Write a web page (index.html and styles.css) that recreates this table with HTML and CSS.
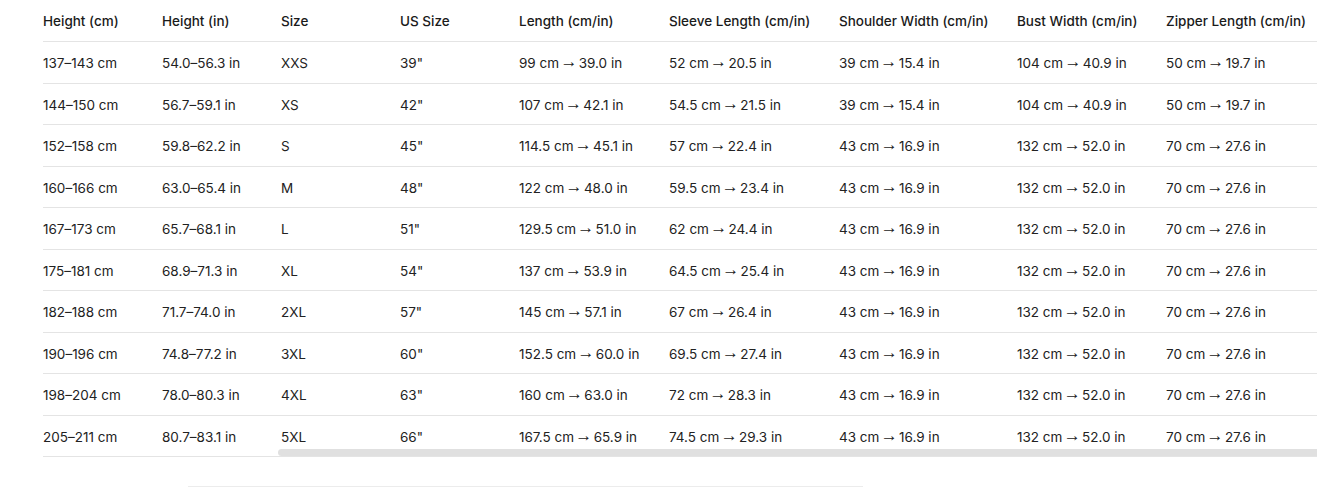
FILE: index.html
```html
<!DOCTYPE html>
<html lang="en">
<head>
<meta charset="utf-8">
<title>Size Chart</title>
<link rel="stylesheet" href="styles.css">
</head>
<body>
<div class="page">
  <div class="table-wrap">
    <table class="size-table">
      <colgroup>
        <col class="c-a"><col class="c-a"><col class="c-a"><col class="c-a">
        <col class="c-len"><col class="c-sleeve"><col class="c-shoulder"><col class="c-bust"><col class="c-zip">
      </colgroup>
      <thead>
        <tr>
          <th>Height (cm)</th><th>Height (in)</th><th>Size</th><th>US Size</th><th>Length (cm/in)</th><th>Sleeve Length (cm/in)</th><th>Shoulder Width (cm/in)</th><th>Bust Width (cm/in)</th><th>Zipper Length (cm/in)</th>
        </tr>
      </thead>
      <tbody>
        <tr><td>137–143 cm</td><td>54.0–56.3 in</td><td>XXS</td><td>39"</td><td>99 cm <span class="arr">→</span> 39.0 in</td><td>52 cm <span class="arr">→</span> 20.5 in</td><td>39 cm <span class="arr">→</span> 15.4 in</td><td>104 cm <span class="arr">→</span> 40.9 in</td><td>50 cm <span class="arr">→</span> 19.7 in</td></tr>
        <tr><td>144–150 cm</td><td>56.7–59.1 in</td><td>XS</td><td>42"</td><td>107 cm <span class="arr">→</span> 42.1 in</td><td>54.5 cm <span class="arr">→</span> 21.5 in</td><td>39 cm <span class="arr">→</span> 15.4 in</td><td>104 cm <span class="arr">→</span> 40.9 in</td><td>50 cm <span class="arr">→</span> 19.7 in</td></tr>
        <tr><td>152–158 cm</td><td>59.8–62.2 in</td><td>S</td><td>45"</td><td>114.5 cm <span class="arr">→</span> 45.1 in</td><td>57 cm <span class="arr">→</span> 22.4 in</td><td>43 cm <span class="arr">→</span> 16.9 in</td><td>132 cm <span class="arr">→</span> 52.0 in</td><td>70 cm <span class="arr">→</span> 27.6 in</td></tr>
        <tr><td>160–166 cm</td><td>63.0–65.4 in</td><td>M</td><td>48"</td><td>122 cm <span class="arr">→</span> 48.0 in</td><td>59.5 cm <span class="arr">→</span> 23.4 in</td><td>43 cm <span class="arr">→</span> 16.9 in</td><td>132 cm <span class="arr">→</span> 52.0 in</td><td>70 cm <span class="arr">→</span> 27.6 in</td></tr>
        <tr><td>167–173 cm</td><td>65.7–68.1 in</td><td>L</td><td>51"</td><td>129.5 cm <span class="arr">→</span> 51.0 in</td><td>62 cm <span class="arr">→</span> 24.4 in</td><td>43 cm <span class="arr">→</span> 16.9 in</td><td>132 cm <span class="arr">→</span> 52.0 in</td><td>70 cm <span class="arr">→</span> 27.6 in</td></tr>
        <tr><td>175–181 cm</td><td>68.9–71.3 in</td><td>XL</td><td>54"</td><td>137 cm <span class="arr">→</span> 53.9 in</td><td>64.5 cm <span class="arr">→</span> 25.4 in</td><td>43 cm <span class="arr">→</span> 16.9 in</td><td>132 cm <span class="arr">→</span> 52.0 in</td><td>70 cm <span class="arr">→</span> 27.6 in</td></tr>
        <tr><td>182–188 cm</td><td>71.7–74.0 in</td><td>2XL</td><td>57"</td><td>145 cm <span class="arr">→</span> 57.1 in</td><td>67 cm <span class="arr">→</span> 26.4 in</td><td>43 cm <span class="arr">→</span> 16.9 in</td><td>132 cm <span class="arr">→</span> 52.0 in</td><td>70 cm <span class="arr">→</span> 27.6 in</td></tr>
        <tr><td>190–196 cm</td><td>74.8–77.2 in</td><td>3XL</td><td>60"</td><td>152.5 cm <span class="arr">→</span> 60.0 in</td><td>69.5 cm <span class="arr">→</span> 27.4 in</td><td>43 cm <span class="arr">→</span> 16.9 in</td><td>132 cm <span class="arr">→</span> 52.0 in</td><td>70 cm <span class="arr">→</span> 27.6 in</td></tr>
        <tr><td>198–204 cm</td><td>78.0–80.3 in</td><td>4XL</td><td>63"</td><td>160 cm <span class="arr">→</span> 63.0 in</td><td>72 cm <span class="arr">→</span> 28.3 in</td><td>43 cm <span class="arr">→</span> 16.9 in</td><td>132 cm <span class="arr">→</span> 52.0 in</td><td>70 cm <span class="arr">→</span> 27.6 in</td></tr>
        <tr><td>205–211 cm</td><td>80.7–83.1 in</td><td>5XL</td><td>66"</td><td>167.5 cm <span class="arr">→</span> 65.9 in</td><td>74.5 cm <span class="arr">→</span> 29.3 in</td><td>43 cm <span class="arr">→</span> 16.9 in</td><td>132 cm <span class="arr">→</span> 52.0 in</td><td>70 cm <span class="arr">→</span> 27.6 in</td></tr>
      </tbody>
    </table>
    <div class="scroll-thumb"></div>
  </div>
  <div class="divider"></div>
</div>
</body>
</html>
```

FILE: styles.css
```css
html, body {
  margin: 0;
  padding: 0;
  background: #ffffff;
}

body {
  font-family: "Inter", "Liberation Sans", sans-serif;
  color: #1f1f1f;
  overflow: hidden;
}

.page {
  padding-left: 43px;
}

.table-wrap {
  position: relative;
  overflow: hidden;
}

.size-table {
  border-collapse: collapse;
  table-layout: fixed;
  width: 1274px;
  font-size: 13.5px;
}

.c-a { width: 119px; }
.c-len { width: 150px; }
.c-sleeve { width: 170px; }
.c-shoulder { width: 178px; }
.c-bust { width: 149px; }
.c-zip { width: 151px; }

.size-table th,
.size-table td {
  padding: 0;
  text-align: left;
  white-space: nowrap;
  border-bottom: 1px solid #e4e4e4;
  line-height: 20px;
  vertical-align: middle;
}

.size-table th {
  font-weight: 500;
  height: 40px;
  padding-top: 1px;
  color: #1a1a1a;
}

.size-table td {
  font-weight: 400;
  height: 38.5px;
  padding-top: 2px;
  color: #222222;
}

.arr {
  font-family: "Liberation Sans", "DejaVu Sans", sans-serif;
  font-size: 17px;
  line-height: 0;
  vertical-align: 1px;
  margin: 0 -2.5px;
}

.scroll-thumb {
  position: absolute;
  left: 235px;
  right: -10px;
  top: 449px;
  height: 7px;
  border-radius: 4px;
  background: #e0e0e0;
}

.divider {
  margin-top: 29px;
  margin-left: 145px;
  width: 675px;
  height: 1px;
  background: #ececec;
}
```
